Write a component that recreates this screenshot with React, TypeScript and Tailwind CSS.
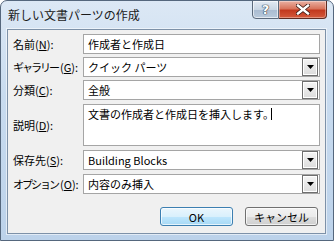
import React from "react";

const font = { fontFamily: '"Noto Sans CJK JP", "Noto Sans", sans-serif' };

function Label({ pre, m, post = "):", tight = false }: { pre: string; m: string; post?: string; tight?: boolean }) {
  return (
    <div className="w-[70px] shrink-0 text-[11px] leading-[14px] text-black whitespace-nowrap">
      <span className={tight ? "tracking-[-2px]" : ""}>{pre}</span>
      <span className={tight ? "ml-[2px]" : ""}>(</span>
      <span className="underline underline-offset-[1px]">{m}</span>
      {post}
    </div>
  );
}

function DropBtn() {
  return (
    <div className="w-[16px] h-[18px] mr-[1px] border border-[#6f6f6f] bg-[linear-gradient(180deg,#f4f4f4,#dcdcdc)] flex items-center justify-center shadow-[inset_0_0_0_1px_#ffffff]">
      <svg width="7" height="4" viewBox="0 0 7 4">
        <path d="M0 0 H7 L3.5 4 Z" fill="#000" />
      </svg>
    </div>
  );
}

function Field({ text, drop = false }: { text: string; drop?: boolean }) {
  return (
    <div className="flex-1 h-[20px] border border-[#a5a5a5] bg-white flex items-center">
      <div className="flex-1 pl-[4px] text-[11px] leading-[14px] text-black whitespace-nowrap">{text}</div>
      {drop && <DropBtn />}
    </div>
  );
}

export default function App() {
  return (
    <div
      style={font}
      className="w-[334px] h-[241px] flex flex-col rounded-t-[7px] border border-[#55677d] bg-[linear-gradient(180deg,#dce8f5_0%,#c8dbef_40%,#bcd2ea_100%)] overflow-hidden"
    >
      {/* Title bar */}
      <div className="h-[28px] shrink-0 flex items-start justify-between">
        <div className="pl-[7px] pt-[6px] text-[12px] leading-[16px] text-[#1a1a1a] whitespace-nowrap">
          新しい文書パーツの作成
        </div>
        <div className="flex mr-[6px] -mt-[1px]">
          <div className="w-[27px] h-[19px] border border-[#5b6a7c] rounded-bl-[4px] bg-[linear-gradient(180deg,#e2eaf3_0%,#c9d6e4_50%,#a9bbd0_51%,#b9cadc_100%)] flex items-center justify-center shadow-[inset_0_0_0_1px_rgba(255,255,255,0.6)]">
            <span
              className="text-[13px] leading-[13px] font-bold text-white"
              style={{ fontFamily: '"DejaVu Sans", sans-serif', textShadow: "0 0 1px #2c3a4a, 0 0 1px #2c3a4a, 0 0 1px #2c3a4a" }}
            >
              ?
            </span>
          </div>
          <div className="w-[48px] h-[19px] border border-l-0 border-[#5e2b22] rounded-br-[4px] bg-[linear-gradient(180deg,#eab1a3_0%,#d8745c_45%,#c2391f_55%,#d45a3c_100%)] flex items-center justify-center shadow-[inset_0_0_0_1px_rgba(255,255,255,0.35)]">
            <svg width="14" height="11" viewBox="0 0 14 11">
              <path d="M2 1.5 L12 9.5 M12 1.5 L2 9.5" stroke="#3a1a14" strokeWidth="4" strokeLinecap="square" />
              <path d="M2 1.5 L12 9.5 M12 1.5 L2 9.5" stroke="#ffffff" strokeWidth="2.4" strokeLinecap="square" />
            </svg>
          </div>
        </div>
      </div>

      {/* Client area */}
      <div className="h-[205px] shrink-0 ml-[6px] mr-[7px] border border-[#7d91a8] bg-[#f0f0f0] shadow-[0_0_0_1px_rgba(255,255,255,0.55)] px-[5px] pt-[4px] flex flex-col">
        <div className="flex items-center">
          <Label pre="名前" m="N" />
          <Field text="作成者と作成日" />
        </div>
        <div className="flex items-center mt-[3px]">
          <Label pre="ギャラリー" m="G" tight />
          <Field text="クイック パーツ" drop />
        </div>
        <div className="flex items-center mt-[3px]">
          <Label pre="分類" m="C" />
          <Field text="全般" drop />
        </div>
        <div className="flex items-center mt-[4px]">
          <Label pre="説明" m="D" />
          <div className="flex-1 h-[42px] border border-[#a5a5a5] bg-white pl-[4px] pt-[2px]">
            <div className="flex items-center text-[11px] leading-[14px] text-black whitespace-nowrap">
              文書の作成者と作成日を挿入します。
              <span className="inline-block w-[1px] h-[12px] bg-black -ml-[3px]" />
            </div>
          </div>
        </div>
        <div className="flex items-center mt-[4px]">
          <Label pre="保存先" m="S" />
          <Field text="Building Blocks" drop />
        </div>
        <div className="flex items-center mt-[4px]">
          <Label pre="オプション" m="O" tight />
          <Field text="内容のみ挿入" drop />
        </div>
        <div className="flex justify-end gap-[12px] mt-[13px] mr-[2px]">
          <div className="w-[73px] h-[19px] rounded-[3px] border border-[#3c7fb1] bg-[linear-gradient(180deg,#eaf6fd_0%,#d9f0fc_50%,#bee6fd_51%,#a7d9f5_100%)] shadow-[inset_0_0_0_1px_rgba(255,255,255,0.7)] flex items-center justify-center text-[11px] leading-[14px] text-black">
            OK
          </div>
          <div className="w-[73px] h-[19px] rounded-[3px] border border-[#707070] bg-[linear-gradient(180deg,#f2f2f2_0%,#ebebeb_50%,#dddddd_51%,#cfcfcf_100%)] shadow-[inset_0_0_0_1px_rgba(255,255,255,0.7)] flex items-center justify-center text-[11px] leading-[14px] text-black">
            キャンセル
          </div>
        </div>
      </div>
      <div className="flex-1" />
    </div>
  );
}
